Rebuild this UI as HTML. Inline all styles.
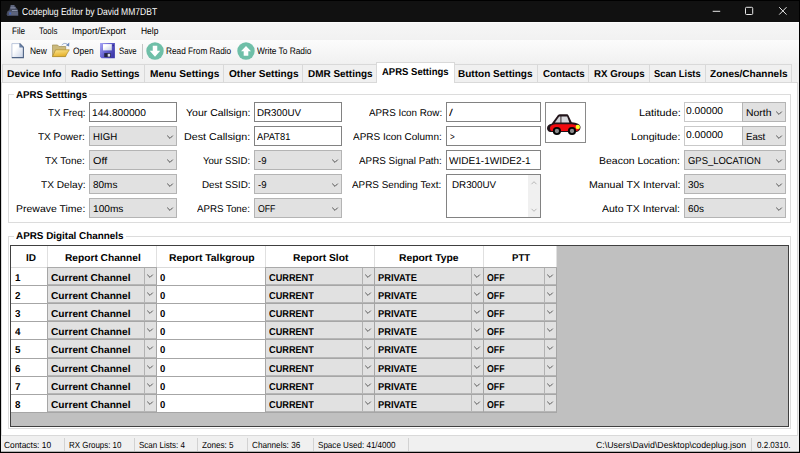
<!DOCTYPE html><html><head><meta charset="utf-8"><title>Codeplug Editor by David MM7DBT</title><style>
*{box-sizing:border-box;margin:0;padding:0}
html,body{width:800px;height:453px;overflow:hidden;background:#f0f0f0}
body{font-family:"Liberation Sans",sans-serif;font-size:10px;color:#000;position:relative}
.a{position:absolute;white-space:nowrap}
.t{position:absolute;white-space:pre;line-height:14px;height:14px;transform-origin:0 0;text-rendering:geometricPrecision}
.b{font-weight:bold}
.inp{position:absolute;background:#fff;border:1px solid #828282}
.cmb{position:absolute;background:#e1e1e1;border:1px solid #b4b4b4}
.tab{position:absolute;background:#f0f0f0;border:1px solid #d9d9d9;border-bottom:none}
</style></head><body>
<div class="a" style="left:0;top:0;width:800px;height:22px;background:#111;border-top:1px solid #000"></div>
<svg class="a" style="left:6px;top:4px" width="13" height="13" viewBox="0 0 13 13"><path d="M4.500 1h4l1.500 2.500l1.500 1.500l.8 3.500v3.500H1.500l-1-1.500l.8-3l2-1.500z" fill="#454b60"/><path d="M2.500 7.500h9.500v3.500h-9z" fill="#5d647c"/><path d="M4.500 3.200h5v1.300h-5zM6 6h5.500v1.100H6z" fill="#8890a8"/><path d="M5 1.500h3v1H5z" fill="#7a829a"/><rect x="3.300" y="8.600" width="1.800" height="1.800" fill="#3f62c4"/></svg>
<div class="t" style="left:22.00px;top:6px;font-size:10px;transform:scaleX(0.8529);color:#fff;">Codeplug Editor by David MM7DBT</div>
<svg class="a" style="left:700px;top:0" width="100" height="22" viewBox="0 0 100 22"><path d="M12.700 11.300h7.500" stroke="#e8e8e8" stroke-width="1" fill="none"/><rect x="45.500" y="7.300" width="7.200" height="7.200" rx="1" fill="none" stroke="#e8e8e8" stroke-width="1"/><path d="M79.200 7.200l7.300 7.400M86.500 7.200l-7.300 7.400" stroke="#e8e8e8" stroke-width="1" fill="none"/></svg>
<div class="a" style="left:1px;top:22px;width:798px;height:18px;background:linear-gradient(#f6f6f6,#f1f1f1);border-top:1px solid #fcfcfc"></div>
<div class="t" style="left:11.75px;top:24px;font-size:9.3px;transform:scaleX(0.8778);">File</div>
<div class="t" style="left:39.25px;top:24px;font-size:9.3px;transform:scaleX(0.8502);">Tools</div>
<div class="t" style="left:72.00px;top:24px;font-size:9.3px;transform:scaleX(0.9650);">Import/Export</div>
<div class="t" style="left:140.75px;top:24px;font-size:9.3px;transform:scaleX(0.9103);">Help</div>
<div class="a" style="left:1px;top:40px;width:798px;height:23px;background:linear-gradient(#fcfcfc,#f1f1f1)"></div>
<svg class="a" style="left:11px;top:43px" width="14" height="16" viewBox="0 0 14 16"><defs><linearGradient id="gn" x1="0" y1="0" x2="1" y2="1"><stop offset=".35" stop-color="#fff"/><stop offset="1" stop-color="#c3cee3"/></linearGradient></defs><path d="M.6 .3h8l4 4v10.500H.6z" fill="url(#gn)"/><path d="M.9 14.500V.6h7.600" fill="none" stroke="#a9b8d2" stroke-width=".8"/><path d="M8.600 .4l3.800 3.900v10.300H.8" fill="none" stroke="#4e6385" stroke-width="1.100"/><path d="M8.400 .5v4h4z" fill="#6880a6"/></svg>
<svg class="a" style="left:52px;top:42px" width="18" height="16" viewBox="0 0 18 16"><defs><linearGradient id="go" x1="0" y1="0" x2=".3" y2="1"><stop offset="0" stop-color="#fbe590"/><stop offset="1" stop-color="#e6b22c"/></linearGradient></defs><path d="M.4 3h5.200l1.300 1.500h6.800V14.500H.4z" fill="#cbb97c" stroke="#9e8d55" stroke-width=".7"/><path d="M3.600 7.800h13.700l-4 6.800H.5z" fill="url(#go)" stroke="#b08c2a" stroke-width=".7"/><path d="M9.800 3.200c1.500-2.200 4-2.300 5.800-.6" fill="none" stroke="#8fa6cb" stroke-width="1"/><path d="M17.300 .6l-.2 3.800l-3.200-1.200z" fill="#6b89bd"/></svg>
<svg class="a" style="left:100px;top:43px" width="15" height="16" viewBox="0 0 15 16"><defs><linearGradient id="gs" x1="0" y1="0" x2="1" y2=".6"><stop offset="0" stop-color="#aaa8f6"/><stop offset=".5" stop-color="#6865d2"/><stop offset="1" stop-color="#403bab"/></linearGradient><linearGradient id="gw" x1="0" y1="0" x2="1" y2="1"><stop offset=".3" stop-color="#fff"/><stop offset="1" stop-color="#c4cde0"/></linearGradient></defs><path d="M0 0h14.900v15.200H1.500L0 13.800z" fill="url(#gs)"/><rect x="3" y="1.100" width="8.800" height="6.300" fill="url(#gw)"/><rect x="12.500" y="1.600" width="1.400" height="1.700" fill="#2f2b8c"/><rect x="4.250" y="10.100" width="6.400" height="4" fill="#23233f"/><rect x="7.700" y="10.800" width="2.400" height="2.800" fill="#d8dcea"/></svg>
<div class="a" style="left:142px;top:44px;width:1px;height:15px;background:#c4c4c4"></div>
<svg class="a" style="left:144.7px;top:40.750px" width="20" height="20" viewBox="-10 -10 20 20"><circle cx="0" cy="0" r="8.700" fill="#6fbfa8"/><path d="M0 5.750L5.250 -.25H2.250V-5.250H-2.250V-.25H-5.250z" fill="#fff"/></svg>
<svg class="a" style="left:235.6px;top:40.750px" width="20" height="20" viewBox="-10 -10 20 20"><circle cx="0" cy="0" r="8.700" fill="#6fbfa8"/><path d="M0 -5L5 .35H2.300V4.750H-2.300V.35H-5z" fill="#fff"/></svg>
<div class="t" style="left:29.50px;top:44px;font-size:9.3px;transform:scaleX(0.9002);">New</div>
<div class="t" style="left:72.50px;top:44px;font-size:9.3px;transform:scaleX(0.9082);">Open</div>
<div class="t" style="left:118.50px;top:44px;font-size:9.3px;transform:scaleX(0.8325);">Save</div>
<div class="t" style="left:166.00px;top:44px;font-size:9.3px;transform:scaleX(0.8880);">Read From Radio</div>
<div class="t" style="left:257.00px;top:44px;font-size:9.3px;transform:scaleX(0.8989);">Write To Radio</div>
<div class="a" style="left:1px;top:82px;width:797px;height:354px;background:#fff;border:1px solid #d9d9d9"></div>
<div class="tab" style="left:2px;top:64px;width:64px;height:18px"></div>
<div class="t b" style="left:7.00px;top:68px;font-size:10px;transform:scaleX(1.0236);">Device Info</div>
<div class="tab" style="left:65px;top:64px;width:80px;height:18px"></div>
<div class="t b" style="left:71.00px;top:68px;font-size:10px;transform:scaleX(0.9795);">Radio Settings</div>
<div class="tab" style="left:144px;top:64px;width:80px;height:18px"></div>
<div class="t b" style="left:149.50px;top:68px;font-size:10px;transform:scaleX(1.0142);">Menu Settings</div>
<div class="tab" style="left:223px;top:64px;width:80px;height:18px"></div>
<div class="t b" style="left:228.50px;top:68px;font-size:10px;transform:scaleX(1.0096);">Other Settings</div>
<div class="tab" style="left:302px;top:64px;width:75px;height:18px"></div>
<div class="t b" style="left:307.50px;top:68px;font-size:10px;transform:scaleX(0.9933);">DMR Settings</div>
<div class="a" style="left:376px;top:62px;width:79px;height:21px;background:#fff;border:1px solid #d9d9d9;border-bottom:none"></div>
<div class="t b" style="left:382.00px;top:66px;font-size:10px;transform:scaleX(0.9511);">APRS Settings</div>
<div class="tab" style="left:454px;top:64px;width:84px;height:18px"></div>
<div class="t b" style="left:458.00px;top:68px;font-size:10px;transform:scaleX(1.0017);">Button Settings</div>
<div class="tab" style="left:537px;top:64px;width:52px;height:18px"></div>
<div class="t b" style="left:542.50px;top:68px;font-size:10px;transform:scaleX(0.9717);">Contacts</div>
<div class="tab" style="left:588px;top:64px;width:62px;height:18px"></div>
<div class="t b" style="left:594.00px;top:68px;font-size:10px;transform:scaleX(0.9684);">RX Groups</div>
<div class="tab" style="left:649px;top:64px;width:57px;height:18px"></div>
<div class="t b" style="left:654.00px;top:68px;font-size:10px;transform:scaleX(0.9315);">Scan Lists</div>
<div class="tab" style="left:705px;top:64px;width:87px;height:18px"></div>
<div class="t b" style="left:710.00px;top:68px;font-size:10px;transform:scaleX(1.0042);">Zones/Channels</div>
<div class="a" style="left:8px;top:94px;width:783px;height:129px;border:1px solid #dcdcdc"></div>
<div class="a" style="left:13.5px;top:94px;width:75.5px;height:1px;background:#fff"></div>
<div class="t b" style="left:15.50px;top:89px;font-size:10px;transform:scaleX(0.9691);">APRS Setttings</div>
<div class="t" style="left:47.50px;top:107px;font-size:9.9px;transform:scaleX(0.9757);">TX Freq:</div>
<div class="inp" style="left:89px;top:102px;width:88px;height:20px;border-color:#828282"></div>
<div class="t" style="left:92.00px;top:107px;font-size:9.9px;transform:scaleX(1.0346);">144.800000</div>
<div class="t" style="left:38.25px;top:131px;font-size:9.9px;transform:scaleX(1.0143);">TX Power:</div>
<div class="cmb" style="left:89px;top:126px;width:88px;height:20px"></div>
<svg class="a" style="left:165.2px;top:131.9px" width="10" height="10" viewBox="-5 -5 10 10"><path d="M-2.8 -1.4 L0 1.4 L2.8 -1.4" fill="none" stroke="#4a4a4a" stroke-width="0.95"/></svg>
<div class="t" style="left:92.50px;top:131px;font-size:9.9px;transform:scaleX(0.9774);">HIGH</div>
<div class="t" style="left:45.00px;top:155px;font-size:9.9px;transform:scaleX(1.0123);">TX Tone:</div>
<div class="cmb" style="left:89px;top:150px;width:88px;height:20px"></div>
<svg class="a" style="left:165.2px;top:155.9px" width="10" height="10" viewBox="-5 -5 10 10"><path d="M-2.8 -1.4 L0 1.4 L2.8 -1.4" fill="none" stroke="#4a4a4a" stroke-width="0.95"/></svg>
<div class="t" style="left:92.50px;top:155px;font-size:9.9px;transform:scaleX(1.0947);">Off</div>
<div class="t" style="left:40.50px;top:179px;font-size:9.9px;transform:scaleX(1.0268);">TX Delay:</div>
<div class="cmb" style="left:89px;top:174px;width:88px;height:20px"></div>
<svg class="a" style="left:165.2px;top:179.9px" width="10" height="10" viewBox="-5 -5 10 10"><path d="M-2.8 -1.4 L0 1.4 L2.8 -1.4" fill="none" stroke="#4a4a4a" stroke-width="0.95"/></svg>
<div class="t" style="left:92.50px;top:179px;font-size:9.9px;transform:scaleX(1.0120);">80ms</div>
<div class="t" style="left:15.50px;top:203px;font-size:9.9px;transform:scaleX(1.0619);">Prewave Time:</div>
<div class="cmb" style="left:89px;top:198px;width:88px;height:20px"></div>
<svg class="a" style="left:165.2px;top:203.9px" width="10" height="10" viewBox="-5 -5 10 10"><path d="M-2.8 -1.4 L0 1.4 L2.8 -1.4" fill="none" stroke="#4a4a4a" stroke-width="0.95"/></svg>
<div class="t" style="left:92.50px;top:203px;font-size:9.9px;transform:scaleX(1.0269);">100ms</div>
<div class="t" style="left:185.80px;top:107px;font-size:9.9px;transform:scaleX(1.0632);">Your Callsign:</div>
<div class="inp" style="left:254px;top:102px;width:88px;height:20px;border-color:#828282"></div>
<div class="t" style="left:257.00px;top:107px;font-size:9.9px;transform:scaleX(0.9895);">DR300UV</div>
<div class="t" style="left:184.10px;top:131px;font-size:9.9px;transform:scaleX(1.0852);">Dest Callsign:</div>
<div class="inp" style="left:254px;top:126px;width:88px;height:20px;border-color:#828282"></div>
<div class="t" style="left:257.00px;top:131px;font-size:9.9px;transform:scaleX(0.9465);">APAT81</div>
<div class="t" style="left:203.00px;top:155px;font-size:9.9px;transform:scaleX(0.9719);">Your SSID:</div>
<div class="cmb" style="left:254px;top:150px;width:88px;height:20px"></div>
<svg class="a" style="left:330.2px;top:155.9px" width="10" height="10" viewBox="-5 -5 10 10"><path d="M-2.8 -1.4 L0 1.4 L2.8 -1.4" fill="none" stroke="#4a4a4a" stroke-width="0.95"/></svg>
<div class="t" style="left:257.60px;top:155px;font-size:9.9px;transform:scaleX(0.9689);">-9</div>
<div class="t" style="left:201.60px;top:179px;font-size:9.9px;transform:scaleX(0.9938);">Dest SSID:</div>
<div class="cmb" style="left:254px;top:174px;width:88px;height:20px"></div>
<svg class="a" style="left:330.2px;top:179.9px" width="10" height="10" viewBox="-5 -5 10 10"><path d="M-2.8 -1.4 L0 1.4 L2.8 -1.4" fill="none" stroke="#4a4a4a" stroke-width="0.95"/></svg>
<div class="t" style="left:257.60px;top:179px;font-size:9.9px;transform:scaleX(0.9689);">-9</div>
<div class="t" style="left:197.10px;top:203px;font-size:9.9px;transform:scaleX(0.9859);">APRS Tone:</div>
<div class="cmb" style="left:254px;top:198px;width:88px;height:20px"></div>
<svg class="a" style="left:330.2px;top:203.9px" width="10" height="10" viewBox="-5 -5 10 10"><path d="M-2.8 -1.4 L0 1.4 L2.8 -1.4" fill="none" stroke="#4a4a4a" stroke-width="0.95"/></svg>
<div class="t" style="left:257.60px;top:203px;font-size:9.9px;transform:scaleX(0.8827);">OFF</div>
<div class="t" style="left:368.60px;top:107px;font-size:9.9px;transform:scaleX(0.9945);">APRS Icon Row:</div>
<div class="t" style="left:353.00px;top:131px;font-size:9.9px;transform:scaleX(1.0107);">APRS Icon Column:</div>
<div class="t" style="left:358.90px;top:155px;font-size:9.9px;transform:scaleX(0.9995);">APRS Signal Path:</div>
<div class="t" style="left:352.30px;top:179px;font-size:9.9px;transform:scaleX(0.9997);">APRS Sending Text:</div>
<div class="inp" style="left:446px;top:102px;width:95px;height:20px;border-color:#828282"></div>
<div class="t" style="left:449.20px;top:107px;font-size:9.9px;transform:scaleX(1.4000);">/</div>
<div class="inp" style="left:446px;top:126px;width:95px;height:20px;border-color:#828282"></div>
<div class="t" style="left:449.50px;top:131px;font-size:9.9px;transform:scaleX(0.8167);">&gt;</div>
<div class="inp" style="left:446px;top:150px;width:95px;height:20px;border-color:#828282"></div>
<div class="t" style="left:448.90px;top:155px;font-size:9.9px;transform:scaleX(1.0184);">WIDE1-1WIDE2-1</div>
<div class="inp" style="left:446px;top:174px;width:95px;height:44px;border-color:#828282"></div>
<div class="t" style="left:451.50px;top:179px;font-size:9.9px;transform:scaleX(0.9917);">DR300UV</div>
<div class="a" style="left:528px;top:175px;width:12px;height:42px;background:#f0f0f0"></div>
<svg class="a" style="left:529px;top:178px" width="10" height="10" viewBox="-5 -5 10 10"><path d="M-2.500 1.200L0 -1.300L2.500 1.200" fill="none" stroke="#b8b8b8" stroke-width="1"/></svg>
<svg class="a" style="left:529px;top:205px" width="10" height="10" viewBox="-5 -5 10 10"><path d="M-2.500 -1.200L0 1.300L2.500 -1.200" fill="none" stroke="#b8b8b8" stroke-width="1"/></svg>
<div class="a" style="left:545px;top:102px;width:41px;height:41px;background:#fff;border:1px solid #8a8a8a"></div>
<svg class="a" style="left:545px;top:102px" width="41" height="41" viewBox="0 0 41 41"><path d="M2 26.300C2 23.600 4 22.500 6.600 21.800L13 13.100C13.500 12.400 14.500 12.200 15.500 12.200H21.500C22.600 12.200 23.100 12.700 23.500 13.500L26.700 20.300C31.500 20.700 35.700 22.200 35.500 25.600C35.400 28 33.600 29.700 31.500 30H5C3 29.600 2 28 2 26.300z" fill="#22141a"/><path d="M5 26C5 23.800 7 22.500 10 22.200H27C31 22.500 34.300 23.600 34.300 25.700C34.200 27.700 32.800 29 31 29.100H7C5.500 28.700 5 27.500 5 26z" fill="#f20a0e"/><path d="M9.900 20.600L14.200 14.400h1.300v6.200z" fill="#d2d2d6"/><path d="M16.400 14.400h5.700l2.300 6.200h-8z" fill="#d8d8dc"/><circle cx="11.900" cy="29" r="4.100" fill="#050505"/><circle cx="11.900" cy="29" r="2.150" fill="#8a8a8a"/><circle cx="27" cy="29" r="4.100" fill="#050505"/><circle cx="27" cy="29" r="2.150" fill="#8a8a8a"/><circle cx="32.800" cy="24.900" r="2.200" fill="#ffff24"/></svg>
<div class="t" style="left:638.50px;top:107px;font-size:9.9px;transform:scaleX(1.1012);">Latitude:</div>
<div class="t" style="left:630.80px;top:131px;font-size:9.9px;transform:scaleX(1.0709);">Longitude:</div>
<div class="t" style="left:599.20px;top:155px;font-size:9.9px;transform:scaleX(1.0613);">Beacon Location:</div>
<div class="t" style="left:588.50px;top:179px;font-size:9.9px;transform:scaleX(1.0710);">Manual TX Interval:</div>
<div class="t" style="left:602.00px;top:203px;font-size:9.9px;transform:scaleX(1.0631);">Auto TX Interval:</div>
<div class="inp" style="left:684px;top:102px;width:59px;height:20px;border-color:#c9c9c9"></div>
<div class="t" style="left:685.80px;top:105px;font-size:9.9px;transform:scaleX(1.0386);">0.00000</div>
<div class="cmb" style="left:742px;top:102px;width:44px;height:20px"></div>
<svg class="a" style="left:774.2px;top:107.9px" width="10" height="10" viewBox="-5 -5 10 10"><path d="M-2.8 -1.4 L0 1.4 L2.8 -1.4" fill="none" stroke="#4a4a4a" stroke-width="0.95"/></svg>
<div class="t" style="left:746.10px;top:107px;font-size:9.9px;transform:scaleX(1.0526);">North</div>
<div class="inp" style="left:684px;top:126px;width:59px;height:20px;border-color:#c9c9c9"></div>
<div class="t" style="left:685.80px;top:129px;font-size:9.9px;transform:scaleX(1.0386);">0.00000</div>
<div class="cmb" style="left:742px;top:126px;width:44px;height:20px"></div>
<svg class="a" style="left:774.2px;top:131.9px" width="10" height="10" viewBox="-5 -5 10 10"><path d="M-2.8 -1.4 L0 1.4 L2.8 -1.4" fill="none" stroke="#4a4a4a" stroke-width="0.95"/></svg>
<div class="t" style="left:746.10px;top:131px;font-size:9.9px;transform:scaleX(0.9742);">East</div>
<div class="cmb" style="left:684px;top:150px;width:102px;height:20px"></div>
<svg class="a" style="left:774.2px;top:155.9px" width="10" height="10" viewBox="-5 -5 10 10"><path d="M-2.8 -1.4 L0 1.4 L2.8 -1.4" fill="none" stroke="#4a4a4a" stroke-width="0.95"/></svg>
<div class="t" style="left:687.60px;top:155px;font-size:9.9px;transform:scaleX(0.9558);">GPS_LOCATION</div>
<div class="cmb" style="left:684px;top:174px;width:102px;height:20px"></div>
<svg class="a" style="left:774.2px;top:179.9px" width="10" height="10" viewBox="-5 -5 10 10"><path d="M-2.8 -1.4 L0 1.4 L2.8 -1.4" fill="none" stroke="#4a4a4a" stroke-width="0.95"/></svg>
<div class="t" style="left:687.60px;top:179px;font-size:9.9px;transform:scaleX(1.0073);">30s</div>
<div class="cmb" style="left:684px;top:198px;width:102px;height:20px"></div>
<svg class="a" style="left:774.2px;top:203.9px" width="10" height="10" viewBox="-5 -5 10 10"><path d="M-2.8 -1.4 L0 1.4 L2.8 -1.4" fill="none" stroke="#4a4a4a" stroke-width="0.95"/></svg>
<div class="t" style="left:687.60px;top:203px;font-size:9.9px;transform:scaleX(1.0073);">60s</div>
<div class="a" style="left:8px;top:236px;width:783px;height:193px;border:1px solid #dcdcdc"></div>
<div class="a" style="left:13.5px;top:236px;width:112.0px;height:1px;background:#fff"></div>
<div class="t b" style="left:15.50px;top:230px;font-size:10px;transform:scaleX(0.9877);">APRS Digital Channels</div>
<div class="a" style="left:10px;top:245px;width:779px;height:182px;background:#c0c0c0;border:1px solid #404040"></div>
<div class="a" style="left:11px;top:246px;width:545px;height:21px;background:#fff"></div>
<div class="t b" style="left:25.70px;top:252px;font-size:10px;transform:scaleX(1.0022);">ID</div>
<div class="a" style="left:47px;top:246px;width:1px;height:21px;background:#e0e0e0"></div>
<div class="t b" style="left:64.50px;top:252px;font-size:10px;transform:scaleX(1.0178);">Report Channel</div>
<div class="a" style="left:156px;top:246px;width:1px;height:21px;background:#e0e0e0"></div>
<div class="t b" style="left:169.00px;top:252px;font-size:10px;transform:scaleX(1.0366);">Report Talkgroup</div>
<div class="a" style="left:265px;top:246px;width:1px;height:21px;background:#e0e0e0"></div>
<div class="t b" style="left:292.50px;top:252px;font-size:10px;transform:scaleX(1.0265);">Report Slot</div>
<div class="a" style="left:374px;top:246px;width:1px;height:21px;background:#e0e0e0"></div>
<div class="t b" style="left:399.40px;top:252px;font-size:10px;transform:scaleX(1.0338);">Report Type</div>
<div class="a" style="left:483px;top:246px;width:1px;height:21px;background:#e0e0e0"></div>
<div class="t b" style="left:511.60px;top:252px;font-size:10px;transform:scaleX(0.9586);">PTT</div>
<div class="a" style="left:556px;top:246px;width:1px;height:21px;background:#e0e0e0"></div>
<div class="a" style="left:11px;top:267px;width:546px;height:1px;background:#dadada"></div>
<div class="a" style="left:11px;top:268px;width:546px;height:18px;background:#a6a6a6"></div>
<div class="a" style="left:11px;top:268px;width:36px;height:17px;background:#fff"></div>
<div class="t b" style="left:15.30px;top:272px;font-size:10px;transform:scaleX(0.9800);">1</div>
<div class="a" style="left:48px;top:268px;width:108px;height:17px;background:#e1e1e1;border-bottom:1px solid #b6b6b6"></div>
<div class="a" style="left:144px;top:268px;width:1px;height:16px;background:#b2b2b2"></div>
<div class="t b" style="left:51.25px;top:272px;font-size:10px;transform:scaleX(1.0151);">Current Channel</div>
<svg class="a" style="left:144.7px;top:271.3px" width="10" height="10" viewBox="-5 -5 10 10"><path d="M-2.8 -1.4 L0 1.4 L2.8 -1.4" fill="none" stroke="#5a5a5a" stroke-width="1"/></svg>
<div class="a" style="left:157px;top:268px;width:108px;height:17px;background:#fff"></div>
<div class="t b" style="left:160.10px;top:272px;font-size:10px;transform:scaleX(0.9500);">0</div>
<div class="a" style="left:266px;top:268px;width:108px;height:17px;background:#e1e1e1;border-bottom:1px solid #b6b6b6"></div>
<div class="a" style="left:362px;top:268px;width:1px;height:16px;background:#b2b2b2"></div>
<div class="t b" style="left:269.00px;top:272px;font-size:10px;transform:scaleX(0.9174);">CURRENT</div>
<svg class="a" style="left:362.7px;top:271.3px" width="10" height="10" viewBox="-5 -5 10 10"><path d="M-2.8 -1.4 L0 1.4 L2.8 -1.4" fill="none" stroke="#5a5a5a" stroke-width="1"/></svg>
<div class="a" style="left:375px;top:268px;width:108px;height:17px;background:#e1e1e1;border-bottom:1px solid #b6b6b6"></div>
<div class="a" style="left:471px;top:268px;width:1px;height:16px;background:#b2b2b2"></div>
<div class="t b" style="left:378.10px;top:272px;font-size:10px;transform:scaleX(0.9316);">PRIVATE</div>
<svg class="a" style="left:471.7px;top:271.3px" width="10" height="10" viewBox="-5 -5 10 10"><path d="M-2.8 -1.4 L0 1.4 L2.8 -1.4" fill="none" stroke="#5a5a5a" stroke-width="1"/></svg>
<div class="a" style="left:484px;top:268px;width:72px;height:17px;background:#e1e1e1;border-bottom:1px solid #b6b6b6"></div>
<div class="a" style="left:544px;top:268px;width:1px;height:16px;background:#b2b2b2"></div>
<div class="t b" style="left:487.00px;top:272px;font-size:10px;transform:scaleX(0.8750);">OFF</div>
<svg class="a" style="left:544.7px;top:271.3px" width="10" height="10" viewBox="-5 -5 10 10"><path d="M-2.8 -1.4 L0 1.4 L2.8 -1.4" fill="none" stroke="#5a5a5a" stroke-width="1"/></svg>
<div class="a" style="left:11px;top:286px;width:546px;height:18px;background:#a6a6a6"></div>
<div class="a" style="left:11px;top:286px;width:36px;height:17px;background:#fff"></div>
<div class="t b" style="left:14.80px;top:290px;font-size:10px;transform:scaleX(0.9800);">2</div>
<div class="a" style="left:48px;top:286px;width:108px;height:17px;background:#e1e1e1;border-bottom:1px solid #b6b6b6"></div>
<div class="a" style="left:144px;top:286px;width:1px;height:16px;background:#b2b2b2"></div>
<div class="t b" style="left:51.25px;top:290px;font-size:10px;transform:scaleX(1.0151);">Current Channel</div>
<svg class="a" style="left:144.7px;top:289.3px" width="10" height="10" viewBox="-5 -5 10 10"><path d="M-2.8 -1.4 L0 1.4 L2.8 -1.4" fill="none" stroke="#5a5a5a" stroke-width="1"/></svg>
<div class="a" style="left:157px;top:286px;width:108px;height:17px;background:#fff"></div>
<div class="t b" style="left:160.10px;top:290px;font-size:10px;transform:scaleX(0.9500);">0</div>
<div class="a" style="left:266px;top:286px;width:108px;height:17px;background:#e1e1e1;border-bottom:1px solid #b6b6b6"></div>
<div class="a" style="left:362px;top:286px;width:1px;height:16px;background:#b2b2b2"></div>
<div class="t b" style="left:269.00px;top:290px;font-size:10px;transform:scaleX(0.9174);">CURRENT</div>
<svg class="a" style="left:362.7px;top:289.3px" width="10" height="10" viewBox="-5 -5 10 10"><path d="M-2.8 -1.4 L0 1.4 L2.8 -1.4" fill="none" stroke="#5a5a5a" stroke-width="1"/></svg>
<div class="a" style="left:375px;top:286px;width:108px;height:17px;background:#e1e1e1;border-bottom:1px solid #b6b6b6"></div>
<div class="a" style="left:471px;top:286px;width:1px;height:16px;background:#b2b2b2"></div>
<div class="t b" style="left:378.10px;top:290px;font-size:10px;transform:scaleX(0.9316);">PRIVATE</div>
<svg class="a" style="left:471.7px;top:289.3px" width="10" height="10" viewBox="-5 -5 10 10"><path d="M-2.8 -1.4 L0 1.4 L2.8 -1.4" fill="none" stroke="#5a5a5a" stroke-width="1"/></svg>
<div class="a" style="left:484px;top:286px;width:72px;height:17px;background:#e1e1e1;border-bottom:1px solid #b6b6b6"></div>
<div class="a" style="left:544px;top:286px;width:1px;height:16px;background:#b2b2b2"></div>
<div class="t b" style="left:487.00px;top:290px;font-size:10px;transform:scaleX(0.8750);">OFF</div>
<svg class="a" style="left:544.7px;top:289.3px" width="10" height="10" viewBox="-5 -5 10 10"><path d="M-2.8 -1.4 L0 1.4 L2.8 -1.4" fill="none" stroke="#5a5a5a" stroke-width="1"/></svg>
<div class="a" style="left:11px;top:304px;width:546px;height:18px;background:#a6a6a6"></div>
<div class="a" style="left:11px;top:304px;width:36px;height:17px;background:#fff"></div>
<div class="t b" style="left:14.80px;top:308px;font-size:10px;transform:scaleX(0.9800);">3</div>
<div class="a" style="left:48px;top:304px;width:108px;height:17px;background:#e1e1e1;border-bottom:1px solid #b6b6b6"></div>
<div class="a" style="left:144px;top:304px;width:1px;height:16px;background:#b2b2b2"></div>
<div class="t b" style="left:51.25px;top:308px;font-size:10px;transform:scaleX(1.0151);">Current Channel</div>
<svg class="a" style="left:144.7px;top:307.3px" width="10" height="10" viewBox="-5 -5 10 10"><path d="M-2.8 -1.4 L0 1.4 L2.8 -1.4" fill="none" stroke="#5a5a5a" stroke-width="1"/></svg>
<div class="a" style="left:157px;top:304px;width:108px;height:17px;background:#fff"></div>
<div class="t b" style="left:160.10px;top:308px;font-size:10px;transform:scaleX(0.9500);">0</div>
<div class="a" style="left:266px;top:304px;width:108px;height:17px;background:#e1e1e1;border-bottom:1px solid #b6b6b6"></div>
<div class="a" style="left:362px;top:304px;width:1px;height:16px;background:#b2b2b2"></div>
<div class="t b" style="left:269.00px;top:308px;font-size:10px;transform:scaleX(0.9174);">CURRENT</div>
<svg class="a" style="left:362.7px;top:307.3px" width="10" height="10" viewBox="-5 -5 10 10"><path d="M-2.8 -1.4 L0 1.4 L2.8 -1.4" fill="none" stroke="#5a5a5a" stroke-width="1"/></svg>
<div class="a" style="left:375px;top:304px;width:108px;height:17px;background:#e1e1e1;border-bottom:1px solid #b6b6b6"></div>
<div class="a" style="left:471px;top:304px;width:1px;height:16px;background:#b2b2b2"></div>
<div class="t b" style="left:378.10px;top:308px;font-size:10px;transform:scaleX(0.9316);">PRIVATE</div>
<svg class="a" style="left:471.7px;top:307.3px" width="10" height="10" viewBox="-5 -5 10 10"><path d="M-2.8 -1.4 L0 1.4 L2.8 -1.4" fill="none" stroke="#5a5a5a" stroke-width="1"/></svg>
<div class="a" style="left:484px;top:304px;width:72px;height:17px;background:#e1e1e1;border-bottom:1px solid #b6b6b6"></div>
<div class="a" style="left:544px;top:304px;width:1px;height:16px;background:#b2b2b2"></div>
<div class="t b" style="left:487.00px;top:308px;font-size:10px;transform:scaleX(0.8750);">OFF</div>
<svg class="a" style="left:544.7px;top:307.3px" width="10" height="10" viewBox="-5 -5 10 10"><path d="M-2.8 -1.4 L0 1.4 L2.8 -1.4" fill="none" stroke="#5a5a5a" stroke-width="1"/></svg>
<div class="a" style="left:11px;top:322px;width:546px;height:18px;background:#a6a6a6"></div>
<div class="a" style="left:11px;top:322px;width:36px;height:17px;background:#fff"></div>
<div class="t b" style="left:14.80px;top:326px;font-size:10px;transform:scaleX(0.9800);">4</div>
<div class="a" style="left:48px;top:322px;width:108px;height:17px;background:#e1e1e1;border-bottom:1px solid #b6b6b6"></div>
<div class="a" style="left:144px;top:322px;width:1px;height:16px;background:#b2b2b2"></div>
<div class="t b" style="left:51.25px;top:326px;font-size:10px;transform:scaleX(1.0151);">Current Channel</div>
<svg class="a" style="left:144.7px;top:325.3px" width="10" height="10" viewBox="-5 -5 10 10"><path d="M-2.8 -1.4 L0 1.4 L2.8 -1.4" fill="none" stroke="#5a5a5a" stroke-width="1"/></svg>
<div class="a" style="left:157px;top:322px;width:108px;height:17px;background:#fff"></div>
<div class="t b" style="left:160.10px;top:326px;font-size:10px;transform:scaleX(0.9500);">0</div>
<div class="a" style="left:266px;top:322px;width:108px;height:17px;background:#e1e1e1;border-bottom:1px solid #b6b6b6"></div>
<div class="a" style="left:362px;top:322px;width:1px;height:16px;background:#b2b2b2"></div>
<div class="t b" style="left:269.00px;top:326px;font-size:10px;transform:scaleX(0.9174);">CURRENT</div>
<svg class="a" style="left:362.7px;top:325.3px" width="10" height="10" viewBox="-5 -5 10 10"><path d="M-2.8 -1.4 L0 1.4 L2.8 -1.4" fill="none" stroke="#5a5a5a" stroke-width="1"/></svg>
<div class="a" style="left:375px;top:322px;width:108px;height:17px;background:#e1e1e1;border-bottom:1px solid #b6b6b6"></div>
<div class="a" style="left:471px;top:322px;width:1px;height:16px;background:#b2b2b2"></div>
<div class="t b" style="left:378.10px;top:326px;font-size:10px;transform:scaleX(0.9316);">PRIVATE</div>
<svg class="a" style="left:471.7px;top:325.3px" width="10" height="10" viewBox="-5 -5 10 10"><path d="M-2.8 -1.4 L0 1.4 L2.8 -1.4" fill="none" stroke="#5a5a5a" stroke-width="1"/></svg>
<div class="a" style="left:484px;top:322px;width:72px;height:17px;background:#e1e1e1;border-bottom:1px solid #b6b6b6"></div>
<div class="a" style="left:544px;top:322px;width:1px;height:16px;background:#b2b2b2"></div>
<div class="t b" style="left:487.00px;top:326px;font-size:10px;transform:scaleX(0.8750);">OFF</div>
<svg class="a" style="left:544.7px;top:325.3px" width="10" height="10" viewBox="-5 -5 10 10"><path d="M-2.8 -1.4 L0 1.4 L2.8 -1.4" fill="none" stroke="#5a5a5a" stroke-width="1"/></svg>
<div class="a" style="left:11px;top:340px;width:546px;height:19px;background:#a6a6a6"></div>
<div class="a" style="left:11px;top:340px;width:36px;height:18px;background:#fff"></div>
<div class="t b" style="left:14.80px;top:344px;font-size:10px;transform:scaleX(0.9800);">5</div>
<div class="a" style="left:48px;top:340px;width:108px;height:18px;background:#e1e1e1;border-bottom:1px solid #b6b6b6"></div>
<div class="a" style="left:144px;top:340px;width:1px;height:17px;background:#b2b2b2"></div>
<div class="t b" style="left:51.25px;top:344px;font-size:10px;transform:scaleX(1.0151);">Current Channel</div>
<svg class="a" style="left:144.7px;top:343.3px" width="10" height="10" viewBox="-5 -5 10 10"><path d="M-2.8 -1.4 L0 1.4 L2.8 -1.4" fill="none" stroke="#5a5a5a" stroke-width="1"/></svg>
<div class="a" style="left:157px;top:340px;width:108px;height:18px;background:#fff"></div>
<div class="t b" style="left:160.10px;top:344px;font-size:10px;transform:scaleX(0.9500);">0</div>
<div class="a" style="left:266px;top:340px;width:108px;height:18px;background:#e1e1e1;border-bottom:1px solid #b6b6b6"></div>
<div class="a" style="left:362px;top:340px;width:1px;height:17px;background:#b2b2b2"></div>
<div class="t b" style="left:269.00px;top:344px;font-size:10px;transform:scaleX(0.9174);">CURRENT</div>
<svg class="a" style="left:362.7px;top:343.3px" width="10" height="10" viewBox="-5 -5 10 10"><path d="M-2.8 -1.4 L0 1.4 L2.8 -1.4" fill="none" stroke="#5a5a5a" stroke-width="1"/></svg>
<div class="a" style="left:375px;top:340px;width:108px;height:18px;background:#e1e1e1;border-bottom:1px solid #b6b6b6"></div>
<div class="a" style="left:471px;top:340px;width:1px;height:17px;background:#b2b2b2"></div>
<div class="t b" style="left:378.10px;top:344px;font-size:10px;transform:scaleX(0.9316);">PRIVATE</div>
<svg class="a" style="left:471.7px;top:343.3px" width="10" height="10" viewBox="-5 -5 10 10"><path d="M-2.8 -1.4 L0 1.4 L2.8 -1.4" fill="none" stroke="#5a5a5a" stroke-width="1"/></svg>
<div class="a" style="left:484px;top:340px;width:72px;height:18px;background:#e1e1e1;border-bottom:1px solid #b6b6b6"></div>
<div class="a" style="left:544px;top:340px;width:1px;height:17px;background:#b2b2b2"></div>
<div class="t b" style="left:487.00px;top:344px;font-size:10px;transform:scaleX(0.8750);">OFF</div>
<svg class="a" style="left:544.7px;top:343.3px" width="10" height="10" viewBox="-5 -5 10 10"><path d="M-2.8 -1.4 L0 1.4 L2.8 -1.4" fill="none" stroke="#5a5a5a" stroke-width="1"/></svg>
<div class="a" style="left:11px;top:359px;width:546px;height:18px;background:#a6a6a6"></div>
<div class="a" style="left:11px;top:359px;width:36px;height:17px;background:#fff"></div>
<div class="t b" style="left:14.80px;top:363px;font-size:10px;transform:scaleX(0.9800);">6</div>
<div class="a" style="left:48px;top:359px;width:108px;height:17px;background:#e1e1e1;border-bottom:1px solid #b6b6b6"></div>
<div class="a" style="left:144px;top:359px;width:1px;height:16px;background:#b2b2b2"></div>
<div class="t b" style="left:51.25px;top:363px;font-size:10px;transform:scaleX(1.0151);">Current Channel</div>
<svg class="a" style="left:144.7px;top:362.3px" width="10" height="10" viewBox="-5 -5 10 10"><path d="M-2.8 -1.4 L0 1.4 L2.8 -1.4" fill="none" stroke="#5a5a5a" stroke-width="1"/></svg>
<div class="a" style="left:157px;top:359px;width:108px;height:17px;background:#fff"></div>
<div class="t b" style="left:160.10px;top:363px;font-size:10px;transform:scaleX(0.9500);">0</div>
<div class="a" style="left:266px;top:359px;width:108px;height:17px;background:#e1e1e1;border-bottom:1px solid #b6b6b6"></div>
<div class="a" style="left:362px;top:359px;width:1px;height:16px;background:#b2b2b2"></div>
<div class="t b" style="left:269.00px;top:363px;font-size:10px;transform:scaleX(0.9174);">CURRENT</div>
<svg class="a" style="left:362.7px;top:362.3px" width="10" height="10" viewBox="-5 -5 10 10"><path d="M-2.8 -1.4 L0 1.4 L2.8 -1.4" fill="none" stroke="#5a5a5a" stroke-width="1"/></svg>
<div class="a" style="left:375px;top:359px;width:108px;height:17px;background:#e1e1e1;border-bottom:1px solid #b6b6b6"></div>
<div class="a" style="left:471px;top:359px;width:1px;height:16px;background:#b2b2b2"></div>
<div class="t b" style="left:378.10px;top:363px;font-size:10px;transform:scaleX(0.9316);">PRIVATE</div>
<svg class="a" style="left:471.7px;top:362.3px" width="10" height="10" viewBox="-5 -5 10 10"><path d="M-2.8 -1.4 L0 1.4 L2.8 -1.4" fill="none" stroke="#5a5a5a" stroke-width="1"/></svg>
<div class="a" style="left:484px;top:359px;width:72px;height:17px;background:#e1e1e1;border-bottom:1px solid #b6b6b6"></div>
<div class="a" style="left:544px;top:359px;width:1px;height:16px;background:#b2b2b2"></div>
<div class="t b" style="left:487.00px;top:363px;font-size:10px;transform:scaleX(0.8750);">OFF</div>
<svg class="a" style="left:544.7px;top:362.3px" width="10" height="10" viewBox="-5 -5 10 10"><path d="M-2.8 -1.4 L0 1.4 L2.8 -1.4" fill="none" stroke="#5a5a5a" stroke-width="1"/></svg>
<div class="a" style="left:11px;top:377px;width:546px;height:18px;background:#a6a6a6"></div>
<div class="a" style="left:11px;top:377px;width:36px;height:17px;background:#fff"></div>
<div class="t b" style="left:14.80px;top:381px;font-size:10px;transform:scaleX(0.9800);">7</div>
<div class="a" style="left:48px;top:377px;width:108px;height:17px;background:#e1e1e1;border-bottom:1px solid #b6b6b6"></div>
<div class="a" style="left:144px;top:377px;width:1px;height:16px;background:#b2b2b2"></div>
<div class="t b" style="left:51.25px;top:381px;font-size:10px;transform:scaleX(1.0151);">Current Channel</div>
<svg class="a" style="left:144.7px;top:380.3px" width="10" height="10" viewBox="-5 -5 10 10"><path d="M-2.8 -1.4 L0 1.4 L2.8 -1.4" fill="none" stroke="#5a5a5a" stroke-width="1"/></svg>
<div class="a" style="left:157px;top:377px;width:108px;height:17px;background:#fff"></div>
<div class="t b" style="left:160.10px;top:381px;font-size:10px;transform:scaleX(0.9500);">0</div>
<div class="a" style="left:266px;top:377px;width:108px;height:17px;background:#e1e1e1;border-bottom:1px solid #b6b6b6"></div>
<div class="a" style="left:362px;top:377px;width:1px;height:16px;background:#b2b2b2"></div>
<div class="t b" style="left:269.00px;top:381px;font-size:10px;transform:scaleX(0.9174);">CURRENT</div>
<svg class="a" style="left:362.7px;top:380.3px" width="10" height="10" viewBox="-5 -5 10 10"><path d="M-2.8 -1.4 L0 1.4 L2.8 -1.4" fill="none" stroke="#5a5a5a" stroke-width="1"/></svg>
<div class="a" style="left:375px;top:377px;width:108px;height:17px;background:#e1e1e1;border-bottom:1px solid #b6b6b6"></div>
<div class="a" style="left:471px;top:377px;width:1px;height:16px;background:#b2b2b2"></div>
<div class="t b" style="left:378.10px;top:381px;font-size:10px;transform:scaleX(0.9316);">PRIVATE</div>
<svg class="a" style="left:471.7px;top:380.3px" width="10" height="10" viewBox="-5 -5 10 10"><path d="M-2.8 -1.4 L0 1.4 L2.8 -1.4" fill="none" stroke="#5a5a5a" stroke-width="1"/></svg>
<div class="a" style="left:484px;top:377px;width:72px;height:17px;background:#e1e1e1;border-bottom:1px solid #b6b6b6"></div>
<div class="a" style="left:544px;top:377px;width:1px;height:16px;background:#b2b2b2"></div>
<div class="t b" style="left:487.00px;top:381px;font-size:10px;transform:scaleX(0.8750);">OFF</div>
<svg class="a" style="left:544.7px;top:380.3px" width="10" height="10" viewBox="-5 -5 10 10"><path d="M-2.8 -1.4 L0 1.4 L2.8 -1.4" fill="none" stroke="#5a5a5a" stroke-width="1"/></svg>
<div class="a" style="left:11px;top:395px;width:546px;height:18px;background:#a6a6a6"></div>
<div class="a" style="left:11px;top:395px;width:36px;height:17px;background:#fff"></div>
<div class="t b" style="left:14.80px;top:399px;font-size:10px;transform:scaleX(0.9800);">8</div>
<div class="a" style="left:48px;top:395px;width:108px;height:17px;background:#e1e1e1;border-bottom:1px solid #b6b6b6"></div>
<div class="a" style="left:144px;top:395px;width:1px;height:16px;background:#b2b2b2"></div>
<div class="t b" style="left:51.25px;top:399px;font-size:10px;transform:scaleX(1.0151);">Current Channel</div>
<svg class="a" style="left:144.7px;top:398.3px" width="10" height="10" viewBox="-5 -5 10 10"><path d="M-2.8 -1.4 L0 1.4 L2.8 -1.4" fill="none" stroke="#5a5a5a" stroke-width="1"/></svg>
<div class="a" style="left:157px;top:395px;width:108px;height:17px;background:#fff"></div>
<div class="t b" style="left:160.10px;top:399px;font-size:10px;transform:scaleX(0.9500);">0</div>
<div class="a" style="left:266px;top:395px;width:108px;height:17px;background:#e1e1e1;border-bottom:1px solid #b6b6b6"></div>
<div class="a" style="left:362px;top:395px;width:1px;height:16px;background:#b2b2b2"></div>
<div class="t b" style="left:269.00px;top:399px;font-size:10px;transform:scaleX(0.9174);">CURRENT</div>
<svg class="a" style="left:362.7px;top:398.3px" width="10" height="10" viewBox="-5 -5 10 10"><path d="M-2.8 -1.4 L0 1.4 L2.8 -1.4" fill="none" stroke="#5a5a5a" stroke-width="1"/></svg>
<div class="a" style="left:375px;top:395px;width:108px;height:17px;background:#e1e1e1;border-bottom:1px solid #b6b6b6"></div>
<div class="a" style="left:471px;top:395px;width:1px;height:16px;background:#b2b2b2"></div>
<div class="t b" style="left:378.10px;top:399px;font-size:10px;transform:scaleX(0.9316);">PRIVATE</div>
<svg class="a" style="left:471.7px;top:398.3px" width="10" height="10" viewBox="-5 -5 10 10"><path d="M-2.8 -1.4 L0 1.4 L2.8 -1.4" fill="none" stroke="#5a5a5a" stroke-width="1"/></svg>
<div class="a" style="left:484px;top:395px;width:72px;height:17px;background:#e1e1e1;border-bottom:1px solid #b6b6b6"></div>
<div class="a" style="left:544px;top:395px;width:1px;height:16px;background:#b2b2b2"></div>
<div class="t b" style="left:487.00px;top:399px;font-size:10px;transform:scaleX(0.8750);">OFF</div>
<svg class="a" style="left:544.7px;top:398.3px" width="10" height="10" viewBox="-5 -5 10 10"><path d="M-2.8 -1.4 L0 1.4 L2.8 -1.4" fill="none" stroke="#5a5a5a" stroke-width="1"/></svg>
<div class="a" style="left:47px;top:267px;width:110px;height:1px;background:#aaa"></div>
<div class="a" style="left:265px;top:267px;width:110px;height:1px;background:#aaa"></div>
<div class="a" style="left:374px;top:267px;width:110px;height:1px;background:#aaa"></div>
<div class="a" style="left:483px;top:267px;width:74px;height:1px;background:#aaa"></div>
<div class="a" style="left:1px;top:436px;width:798px;height:16px;background:#f0f0f0"></div>
<div class="t" style="left:3.80px;top:438px;font-size:8.9px;transform:scaleX(0.9441);">Contacts: 10</div>
<div class="t" style="left:68.80px;top:438px;font-size:8.9px;transform:scaleX(0.8934);">RX Groups: 10</div>
<div class="t" style="left:138.60px;top:438px;font-size:8.9px;transform:scaleX(0.9022);">Scan Lists: 4</div>
<div class="t" style="left:202.00px;top:438px;font-size:8.9px;transform:scaleX(0.9162);">Zones: 5</div>
<div class="t" style="left:252.10px;top:438px;font-size:8.9px;transform:scaleX(0.9224);">Channels: 36</div>
<div class="t" style="left:318.00px;top:438px;font-size:8.9px;transform:scaleX(0.9084);">Space Used: 41/4000</div>
<div class="t" style="left:596.00px;top:438px;font-size:8.9px;transform:scaleX(0.9875);">C:\Users\David\Desktop\codeplug.json</div>
<div class="t" style="left:756.60px;top:438px;font-size:8.9px;transform:scaleX(0.9030);">0.2.0310.</div>
<div class="a" style="left:64px;top:438px;width:1px;height:14px;background:#d2d2d2"></div>
<div class="a" style="left:134px;top:438px;width:1px;height:14px;background:#d2d2d2"></div>
<div class="a" style="left:197px;top:438px;width:1px;height:14px;background:#d2d2d2"></div>
<div class="a" style="left:247px;top:438px;width:1px;height:14px;background:#d2d2d2"></div>
<div class="a" style="left:313px;top:438px;width:1px;height:14px;background:#d2d2d2"></div>
<div class="a" style="left:408px;top:438px;width:1px;height:14px;background:#d2d2d2"></div>
<div class="a" style="left:751px;top:438px;width:1px;height:14px;background:#d2d2d2"></div>
<div class="a" style="left:1px;top:451px;width:798px;height:1px;background:#b4b4b4"></div>
<div class="a" style="left:0;top:0;width:800px;height:453px;border:1px solid #000;border-top:none;pointer-events:none"></div>
</body></html>
